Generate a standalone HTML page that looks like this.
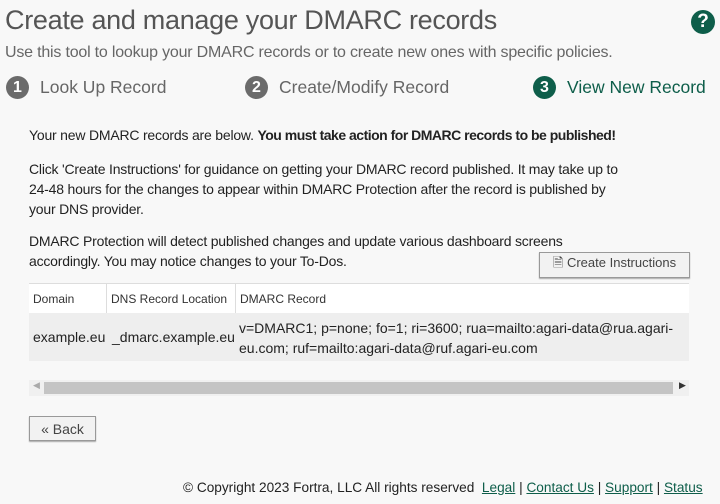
<!DOCTYPE html>
<html><head><meta charset="utf-8"><style>
*{margin:0;padding:0;box-sizing:border-box}
body{width:720px;height:504px;background:#f8f8f8;font-family:"Liberation Sans",sans-serif;color:#222;position:relative;overflow:hidden}
.a{position:absolute;white-space:nowrap}
h1{position:absolute;left:5px;top:5px;font-weight:normal;font-size:27px;color:#555;letter-spacing:-0.3px}
.sub{left:5px;top:44px;font-size:16px;color:#666;letter-spacing:-0.2px}
.step{top:76px;font-size:17.5px;color:#666;display:flex;align-items:center}
.num{width:23px;height:23px;border-radius:50%;background:#6b6b6b;color:#fff;font-size:16px;font-weight:bold;display:inline-flex;align-items:center;justify-content:center;margin-right:11px}
.p{left:29px;font-size:14px;color:#222;line-height:20px;letter-spacing:-0.2px}
.btn{position:absolute;border:1px solid #999;background:#f2f2f2;font-size:13px;color:#444;display:flex;align-items:center;justify-content:center;box-shadow:0 1px 1px #aaa}
.tbl{position:absolute;left:29px;top:283px;width:660px;height:78px;border-top:1px solid #ddd;border-bottom:1px solid #ddd}
.hd{position:absolute;top:0;height:29px;background:#fff;font-size:12px;color:#333;padding:8px 4px}
.row{position:absolute;top:29px;left:0;width:660px;height:48px;background:#eee}
</style></head><body>
<h1>Create and manage your DMARC records</h1>
<div class="a" style="left:691px;top:10px;width:24px;height:24px;border-radius:50%;background:#0e5e4a;color:#fff;font-weight:bold;font-size:19px;text-align:center;line-height:24px">?</div>
<div class="a sub">Use this tool to lookup your DMARC records or to create new ones with specific policies.</div>
<div class="a step" style="left:6px"><span class="num">1</span>Look Up Record</div>
<div class="a step" style="left:245px"><span class="num">2</span>Create/Modify Record</div>
<div class="a step" style="left:533px;color:#0e5e4a"><span class="num" style="background:#0e5e4a">3</span>View New Record</div>
<div class="a p" style="top:125px">Your new DMARC records are below. <b style="letter-spacing:-0.5px">You must take action for DMARC records to be published!</b></div>
<div class="a p" style="top:159px">Click 'Create Instructions' for guidance on getting your DMARC record published. It may take up to<br>24-48 hours for the changes to appear within DMARC Protection after the record is published by<br>your DNS provider.</div>
<div class="a p" style="top:231px">DMARC Protection will detect published changes and update various dashboard screens<br>accordingly. You may notice changes to your To-Dos.</div>
<div class="btn" style="left:539px;top:252px;width:151px;height:26px">&#128462; Create Instructions</div>
<div class="tbl">
<div class="hd" style="left:0;width:78px;border-right:1px solid #ddd">Domain</div>
<div class="hd" style="left:78px;width:129px;border-right:1px solid #ddd">DNS Record Location</div>
<div class="hd" style="left:207px;width:453px">DMARC Record</div>
<div class="row">
<div class="a" style="left:4px;top:16px;font-size:14px">example.eu</div>
<div class="a" style="left:83px;top:16px;font-size:14px">_dmarc.example.eu</div>
<div class="a" style="left:210px;top:5px;font-size:14px;line-height:20px">v=DMARC1; p=none; fo=1; ri=3600; rua=mailto:agari-data@rua.agari-<br>eu.com; ruf=mailto:agari-data@ruf.agari-eu.com</div>
</div></div>
<div class="a" style="left:29px;top:380px;width:660px;height:16px;background:#f0f0f0"></div>
<div class="a" style="left:44px;top:382px;width:629px;height:12px;background:#c4c4c4"></div>
<div class="a" style="left:33px;top:380px;font-size:9px;color:#aaa">◀</div>
<div class="a" style="left:679px;top:380px;font-size:9px;color:#333">▶</div>
<div class="btn" style="left:29px;top:416px;width:67px;height:25px;font-size:14px">« Back</div>
<div class="a" style="left:183px;top:480px;font-size:13.65px;color:#222">© Copyright 2023 Fortra, LLC All rights reserved &nbsp;<u style="color:#0e5e4a">Legal</u> | <u style="color:#0e5e4a">Contact Us</u> | <u style="color:#0e5e4a">Support</u> | <u style="color:#0e5e4a">Status</u></div>
</body></html>
